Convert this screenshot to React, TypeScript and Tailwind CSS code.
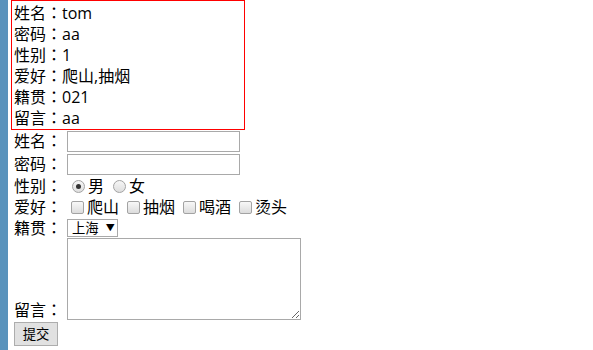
import React from "react";

function C() {
  return <span className="font-['Noto_Sans_CJK_JP',sans-serif] leading-[0px]">：</span>;
}

function Radio({ checked }: { checked?: boolean }) {
  return (
    <span className="ml-[5px] mr-[3px] flex h-[13px] w-[13px] shrink-0 items-center justify-center rounded-full border border-[#a3a3a3] bg-gradient-to-b from-[#f6f6f6] to-[#dedede]">
      {checked ? <span className="h-[5px] w-[5px] rounded-full bg-[#333333]" /> : null}
    </span>
  );
}

function Check() {
  return (
    <span className="ml-[4px] mr-[3px] block h-[13px] w-[13px] shrink-0 rounded-[2px] border border-[#a3a3a3] bg-gradient-to-b from-[#f8f8f8] to-[#dcdcdc]" />
  );
}

function Line({ children }: { children: React.ReactNode }) {
  return <div className="h-[21px] whitespace-nowrap">{children}</div>;
}

export default function App() {
  return (
    <div className="flex h-[350px] w-[593px] overflow-hidden bg-white text-black">
      <div className="w-[8px] shrink-0 bg-[#5a93bc]" />
      <div className="pl-[3px] font-['Open_Sans','Noto_Sans_CJK_SC',sans-serif] text-[16px]">
        <div className="h-[130px] w-[234px] border border-[#ff0000] pl-[2px] pt-[2px] leading-[21px]">
          <Line>姓名<C />tom</Line>
          <Line>密码<C />aa</Line>
          <Line>性别<C />1</Line>
          <Line>爱好<C />爬山,抽烟</Line>
          <Line>籍贯<C />021</Line>
          <Line>留言<C />aa</Line>
        </div>
        <div className="pl-[3px] leading-[21px]">
          <div className="flex h-[23px] items-start">
            <span className="h-[21px] w-[53px] shrink-0 pt-[1px]">姓名<C /></span>
            <input className="mt-[1px] h-[21px] w-[173px] border border-[#a9a9a9] bg-white outline-none" />
          </div>
          <div className="flex h-[23px] items-start">
            <span className="h-[21px] w-[53px] shrink-0 pt-[1px]">密码<C /></span>
            <input type="password" className="mt-[1px] h-[21px] w-[173px] border border-[#a9a9a9] bg-white outline-none" />
          </div>
          <div className="flex h-[21px] items-center">
            <span className="h-[21px] w-[53px] shrink-0">性别<C /></span>
            <Radio checked />
            <span>男</span>
            <span className="w-[4px]" />
            <Radio />
            <span>女</span>
          </div>
          <div className="flex h-[21px] items-center">
            <span className="h-[21px] w-[53px] shrink-0">爱好<C /></span>
            <Check />
            <span>爬山</span>
            <span className="w-[4px]" />
            <Check />
            <span>抽烟</span>
            <span className="w-[4px]" />
            <Check />
            <span>喝酒</span>
            <span className="w-[4px]" />
            <Check />
            <span>烫头</span>
          </div>
          <div className="flex h-[20px] items-center">
            <span className="h-[20px] w-[53px] shrink-0 leading-[20px]">籍贯<C /></span>
            <div className="flex h-[18px] w-[51px] items-center border border-[#a9a9a9] bg-white pl-[4px] text-[13.33px] leading-[16px]">
              <span>上海</span>
              <span className="ml-[7px] text-[9px]">▼</span>
            </div>
          </div>
          <div className="flex h-[82px] items-end">
            <span className="h-[20px] w-[53px] shrink-0 leading-[20px]">留言<C /></span>
            <textarea className="h-[82px] w-[234px] border border-[#a9a9a9] bg-white outline-none" />
          </div>
          <div className="pt-[2px]">
            <button className="flex h-[24px] w-[44px] items-center justify-center border border-[#adadad] bg-[#e1e1e1] text-[13.33px]">
              提交
            </button>
          </div>
        </div>
      </div>
    </div>
  );
}
